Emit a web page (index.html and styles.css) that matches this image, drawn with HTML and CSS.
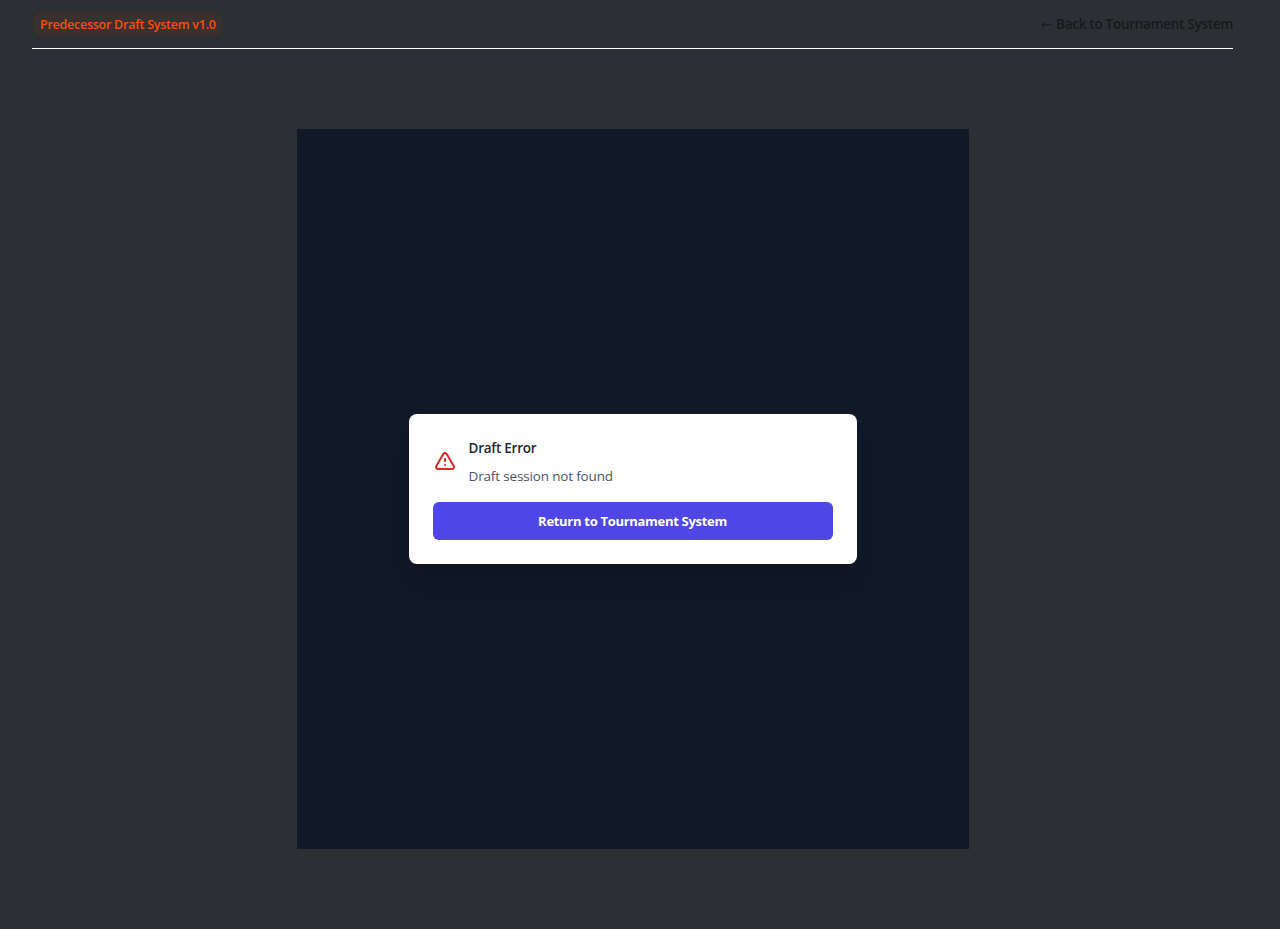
FILE: index.html
```html
<!DOCTYPE html>
<html lang="en">
<head>
<meta charset="utf-8">
<title>Predecessor Draft System</title>
<link rel="stylesheet" href="styles.css">
</head>
<body>
<div class="page">
  <header class="topbar">
    <span class="badge">Predecessor Draft System v1.0</span>
    <a class="back" href="#"><span class="arrow">←</span><span>Back to Tournament System</span></a>
  </header>
  <main class="stage">
    <section class="card">
      <div class="notice">
        <svg class="icon" viewBox="0 0 24 24" fill="none" stroke="currentColor" stroke-width="2" stroke-linecap="round" stroke-linejoin="round"><path d="M12 9v2m0 4h.01m-6.938 4h13.856c1.54 0 2.502-1.667 1.732-3L13.732 4c-.77-1.333-2.694-1.333-3.464 0L3.34 16c-.77 1.333.192 3 1.732 3z"/></svg>
        <div>
          <h3 class="title">Draft Error</h3>
          <p class="message">Draft session not found</p>
        </div>
      </div>
      <button class="return">Return to Tournament System</button>
    </section>
  </main>
</div>
</body>
</html>
```
FILE: styles.css
```css
* { box-sizing: border-box; margin: 0; padding: 0; }
body {
  height: 929px;
  overflow: hidden;
  background: #2c2f33;
  font-family: "Open Sans", "Noto Sans", sans-serif;
  font-size: 13.5px;
  line-height: 20px;
}
.page { width: 1265px; padding: 0 32px; }
.topbar {
  display: flex;
  align-items: center;
  justify-content: space-between;
  height: 49px;
  border-bottom: 1px solid #fff;
}
.badge {
  height: 24px;
  padding: 1px 8px 0;
  border-radius: 12px;
  background: #3a302e;
  color: #ff4b0d;
  font-size: 12.5px;
  font-weight: 600;
  line-height: 24px;
  letter-spacing: -0.25px;
}
.back {
  display: flex;
  color: #18191b;
  font-weight: 600;
  letter-spacing: -0.27px;
  text-decoration: none;
}
.arrow {
  width: 15px;
  padding-top: 1px;
  font-family: "DejaVu Sans", sans-serif;
  font-size: 13px;
  font-weight: 400;
}
.stage {
  display: flex;
  align-items: center;
  justify-content: center;
  width: 672px;
  height: 720px;
  margin: 80px auto 0;
  background: #111827;
}
.card {
  width: 448px;
  padding: 24px;
  border-radius: 8px;
  background: #fff;
  box-shadow: 0 20px 25px -5px rgba(0, 0, 0, .1), 0 8px 10px -6px rgba(0, 0, 0, .1);
}
.notice { display: flex; align-items: center; gap: 12px; margin-bottom: 16px; }
.icon { width: 24px; height: 24px; color: #dc2626; }
.title { color: #1f2937; font-size: 13.5px; font-weight: 600; letter-spacing: -0.25px; }
.message { margin-top: 8px; color: #4b5563; letter-spacing: -0.16px; }
.return {
  display: block;
  width: 100%;
  height: 38px;
  border: 0;
  border-radius: 6px;
  background: #4f46e5;
  color: #fff;
  font: 700 13px/20px "Open Sans", "Noto Sans", sans-serif;
  letter-spacing: -0.3px;
}
```
